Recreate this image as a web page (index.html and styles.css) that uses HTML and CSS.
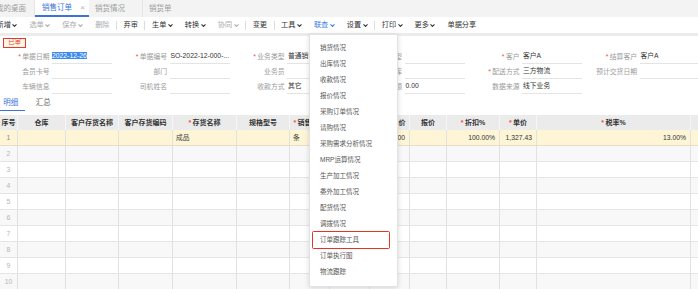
FILE: index.html
```html
<!DOCTYPE html>
<html lang="zh-CN">
<head>
<meta charset="utf-8">
<title>销售订单</title>
<link rel="stylesheet" href="styles.css">
</head>
<body>
<div class="tabbar">
  <div class="tab tab-first">我的桌面</div>
  <div class="tab tab-active"><span>销售订单</span><span class="close">×</span></div>
  <div class="tab tab-third">销货情况</div>
  <div class="tab tab-fourth">销货单</div>
</div>

<div class="toolbar">
  <span class="tb first">新增<svg class="chev" viewBox="0 0 5 3"><polyline points="0.5,0.4 2.5,2.4 4.5,0.4"/></svg></span>
  <span class="tb dis">选单<svg class="chev" viewBox="0 0 5 3"><polyline points="0.5,0.4 2.5,2.4 4.5,0.4"/></svg></span>
  <span class="tb dis">保存<svg class="chev" viewBox="0 0 5 3"><polyline points="0.5,0.4 2.5,2.4 4.5,0.4"/></svg></span>
  <span class="tb dis">删除</span>
  <span class="sep"></span>
  <span class="tb">弃审</span>
  <span class="sep"></span>
  <span class="tb">生单<svg class="chev" viewBox="0 0 5 3"><polyline points="0.5,0.4 2.5,2.4 4.5,0.4"/></svg></span>
  <span class="tb">转换<svg class="chev" viewBox="0 0 5 3"><polyline points="0.5,0.4 2.5,2.4 4.5,0.4"/></svg></span>
  <span class="tb dis">协同<svg class="chev" viewBox="0 0 5 3"><polyline points="0.5,0.4 2.5,2.4 4.5,0.4"/></svg></span>
  <span class="sep"></span>
  <span class="tb">变更</span>
  <span class="sep"></span>
  <span class="tb">工具<svg class="chev" viewBox="0 0 5 3"><polyline points="0.5,0.4 2.5,2.4 4.5,0.4"/></svg></span>
  <span class="tb blue">联查<svg class="chev" viewBox="0 0 5 3"><polyline points="0.5,0.4 2.5,2.4 4.5,0.4"/></svg></span>
  <span class="tb">设置<svg class="chev" viewBox="0 0 5 3"><polyline points="0.5,0.4 2.5,2.4 4.5,0.4"/></svg></span>
  <span class="sep"></span>
  <span class="tb">打印<svg class="chev" viewBox="0 0 5 3"><polyline points="0.5,0.4 2.5,2.4 4.5,0.4"/></svg></span>
  <span class="tb">更多<svg class="chev" viewBox="0 0 5 3"><polyline points="0.5,0.4 2.5,2.4 4.5,0.4"/></svg></span>
  <span class="tb">单据分享</span>
</div>

<div class="status"><span class="stamp">已审</span></div>

<div class="form">
  <div class="field"><div class="lbl"><i class="req">*</i>单据日期</div><div class="inp"><span class="sel">2022-12-26</span></div></div>
  <div class="field"><div class="lbl"><i class="req">*</i>单据编号</div><div class="inp">SO-2022-12-000-...</div></div>
  <div class="field"><div class="lbl"><i class="req">*</i>业务类型</div><div class="inp">普通销售</div></div>
  <div class="field"><div class="lbl"><i class="req">*</i>发票类型</div><div class="inp"></div></div>
  <div class="field"><div class="lbl"><i class="req">*</i>客户</div><div class="inp">客户A</div></div>
  <div class="field"><div class="lbl"><i class="req">*</i>结算客户</div><div class="inp">客户A</div></div>

  <div class="field"><div class="lbl">会员卡号</div><div class="inp"></div></div>
  <div class="field"><div class="lbl">部门</div><div class="inp"></div></div>
  <div class="field"><div class="lbl">业务员</div><div class="inp"></div></div>
  <div class="field"><div class="lbl">仓库</div><div class="inp"></div></div>
  <div class="field"><div class="lbl"><i class="req">*</i>配送方式</div><div class="inp">三方物流</div></div>
  <div class="field"><div class="lbl">预计交货日期</div><div class="inp"></div></div>

  <div class="field"><div class="lbl">车辆信息</div><div class="inp"></div></div>
  <div class="field"><div class="lbl">司机姓名</div><div class="inp"></div></div>
  <div class="field"><div class="lbl">收款方式</div><div class="inp">其它</div></div>
  <div class="field"><div class="lbl">订金金额</div><div class="inp">0.00</div></div>
  <div class="field"><div class="lbl">数据来源</div><div class="inp">线下业务</div></div>
  <div class="field"></div>
</div>

<div class="subtabs">
  <div class="subtab active">明细</div>
  <div class="subtab">汇总</div>
</div>

<div class="grid">
  <div class="row head">
    <div class="c">序号</div><div class="c">仓库</div><div class="c">客户存货名称</div><div class="c">客户存货编码</div>
    <div class="c"><i class="req">*</i>存货名称</div><div class="c">规格型号</div><div class="c"><i class="req">*</i>销售单位</div>
    <div class="c"><i class="req">*</i>数量</div><div class="c"><i class="req">*</i>含税单价</div><div class="c">报价</div>
    <div class="c"><i class="req">*</i>折扣%</div><div class="c"><i class="req">*</i>单价</div><div class="c"><i class="req">*</i>税率%</div><div class="c"><i class="req">*</i>税额</div>
  </div>
  <div class="row cur">
    <div class="c num">1</div><div class="c"></div><div class="c"></div><div class="c"></div>
    <div class="c l">成品</div><div class="c"></div><div class="c l">条</div>
    <div class="c r">1.00</div><div class="c r">1,500.00</div><div class="c"></div>
    <div class="c r">100.00%</div><div class="c r">1,327.43</div><div class="c r">13.00%</div><div class="c"></div>
  </div>
  <div class="row alt"><div class="c num">2</div><div class="c"></div><div class="c"></div><div class="c"></div><div class="c"></div><div class="c"></div><div class="c"></div><div class="c"></div><div class="c"></div><div class="c"></div><div class="c"></div><div class="c"></div><div class="c"></div><div class="c"></div></div>
  <div class="row"><div class="c num">3</div><div class="c"></div><div class="c"></div><div class="c"></div><div class="c"></div><div class="c"></div><div class="c"></div><div class="c"></div><div class="c"></div><div class="c"></div><div class="c"></div><div class="c"></div><div class="c"></div><div class="c"></div></div>
  <div class="row alt"><div class="c num">4</div><div class="c"></div><div class="c"></div><div class="c"></div><div class="c"></div><div class="c"></div><div class="c"></div><div class="c"></div><div class="c"></div><div class="c"></div><div class="c"></div><div class="c"></div><div class="c"></div><div class="c"></div></div>
  <div class="row"><div class="c num">5</div><div class="c"></div><div class="c"></div><div class="c"></div><div class="c"></div><div class="c"></div><div class="c"></div><div class="c"></div><div class="c"></div><div class="c"></div><div class="c"></div><div class="c"></div><div class="c"></div><div class="c"></div></div>
  <div class="row alt"><div class="c num">6</div><div class="c"></div><div class="c"></div><div class="c"></div><div class="c"></div><div class="c"></div><div class="c"></div><div class="c"></div><div class="c"></div><div class="c"></div><div class="c"></div><div class="c"></div><div class="c"></div><div class="c"></div></div>
  <div class="row"><div class="c num">7</div><div class="c"></div><div class="c"></div><div class="c"></div><div class="c"></div><div class="c"></div><div class="c"></div><div class="c"></div><div class="c"></div><div class="c"></div><div class="c"></div><div class="c"></div><div class="c"></div><div class="c"></div></div>
  <div class="row alt"><div class="c num">8</div><div class="c"></div><div class="c"></div><div class="c"></div><div class="c"></div><div class="c"></div><div class="c"></div><div class="c"></div><div class="c"></div><div class="c"></div><div class="c"></div><div class="c"></div><div class="c"></div><div class="c"></div></div>
  <div class="row"><div class="c num">9</div><div class="c"></div><div class="c"></div><div class="c"></div><div class="c"></div><div class="c"></div><div class="c"></div><div class="c"></div><div class="c"></div><div class="c"></div><div class="c"></div><div class="c"></div><div class="c"></div><div class="c"></div></div>
  <div class="row alt"><div class="c num">10</div><div class="c"></div><div class="c"></div><div class="c"></div><div class="c"></div><div class="c"></div><div class="c"></div><div class="c"></div><div class="c"></div><div class="c"></div><div class="c"></div><div class="c"></div><div class="c"></div><div class="c"></div></div>
</div>

<div class="menu">
  <div class="mi">销货情况</div>
  <div class="mi">出库情况</div>
  <div class="mi">收款情况</div>
  <div class="mi">报价情况</div>
  <div class="mi">采购订单情况</div>
  <div class="mi">请购情况</div>
  <div class="mi">采购需求分析情况</div>
  <div class="mi">MRP运算情况</div>
  <div class="mi">生产加工情况</div>
  <div class="mi">委外加工情况</div>
  <div class="mi">配货情况</div>
  <div class="mi">调拨情况</div>
  <div class="mi hl">订单跟踪工具</div>
  <div class="mi">订单执行图</div>
  <div class="mi">物流跟踪</div>
</div>
</body>
</html>
```

FILE: styles.css
```css
* { box-sizing: border-box; }

html, body { margin: 0; padding: 0; }

body {
  width: 698px;
  height: 289px;
  overflow: hidden;
  position: relative;
  background: #fff;
  color: #333;
  font-family: "Liberation Sans", "Noto Sans CJK SC", sans-serif;
}

/* ---------- top tabs ---------- */
.tabbar {
  display: flex;
  height: 17px;
  background: #f3f3f3;
  font-size: 7.5px;
  line-height: 17px;
  color: #9c9c9c;
  white-space: nowrap;
}
.tab { height: 17px; }
.tab-first {
  width: 46px;
  margin-left: -11px;
  padding-left: 7px;
  border-right: 1px solid #e4e4e4;
}
.tab-active {
  display: flex;
  width: 54px;
  padding-left: 7px;
  padding-right: 4px;
  background: #fff;
  color: #3b73d9;
  border-bottom: 2px solid #3b73d9;
  line-height: 16px;
}
.tab-active .close {
  margin-left: auto;
  color: #b0b0b0;
  font-size: 8px;
}
.tab-third {
  width: 54px;
  padding-left: 6px;
  border-right: 1px solid #e4e4e4;
}
.tab-fourth { padding-left: 6px; }

/* ---------- toolbar ---------- */
.toolbar {
  display: flex;
  align-items: center;
  gap: 12px;
  height: 19px;
  border-bottom: 3px solid #ececec;
  font-size: 7.2px;
  line-height: 10px;
  white-space: nowrap;
}
.tb {
  display: flex;
  align-items: center;
  color: #333;
}
.tb.first { margin-left: -3.5px; }
.tb.dis { color: #ababab; }
.tb.blue { color: #3a7ce0; }
.chev {
  width: 5px;
  height: 3px;
  margin-left: 1.5px;
  fill: none;
  stroke: currentColor;
  stroke-width: 1.1;
}
.sep {
  width: 1px;
  height: 9px;
  background: #dcdcdc;
  margin: 0 -5.5px;
}

/* ---------- status stamp ---------- */
.status {
  height: 13px;
  padding: 2.3px 0 0 3.3px;
}
.stamp {
  display: block;
  width: 22.7px;
  height: 9.4px;
  border: 1.3px solid #e23a2e;
  background: #fff6e6;
  color: #e23a2e;
  font-size: 6.3px;
  line-height: 6.8px;
  text-align: center;
}

/* ---------- header form ---------- */
.form {
  display: grid;
  grid-template-columns: repeat(6, 117.5px);
  grid-auto-rows: 15px;
}
.field {
  display: flex;
  height: 15px;
}
.lbl {
  width: 49.5px;
  flex: none;
  text-align: right;
  color: #9a9a9a;
  font-size: 6.8px;
  line-height: 15px;
  white-space: nowrap;
}
.req {
  color: #f0524a;
  font-style: normal;
  margin-right: 1.5px;
}
.inp {
  width: 60px;
  flex: none;
  height: 15px;
  margin-left: 2.5px;
  padding-left: 1px;
  border-bottom: 1px solid #e4e4e4;
  font-size: 6.8px;
  line-height: 14px;
  color: #333;
  white-space: nowrap;
  overflow: hidden;
}
.sel {
  background: #3b8af0;
  color: #fff;
  margin-left: -1px;
}

/* ---------- sub tabs ---------- */
.subtabs {
  display: flex;
  height: 16px;
  margin-top: 1px;
  font-size: 7.5px;
  line-height: 15px;
  color: #666;
}
.subtab {
  height: 16px;
  padding-left: 10.7px;
  border-bottom: 1.5px solid transparent;
}
.subtab.active {
  width: 25px;
  padding-left: 3.3px;
  color: #3b73d9;
  border-bottom-color: #3b73d9;
}

/* ---------- detail grid ---------- */
.grid {
  margin-top: 4px;
  width: 751px;
}
.row {
  display: grid;
  grid-template-columns: 18px 48px 53px 54px 64px 53px 40px 40px 40px 37px 53px 37px 154px 60px;
  height: 16px;
  border-bottom: 1px solid #e5e5e5;
  background: #fff;
}
.row.alt { background: #f8f8f8; }
.row.cur { background: #fdf5d6; border-bottom-color: #e8dfc0; }
.row.head {
  height: 15px;
  background: #ebebeb;
  border-bottom: none;
}
.c {
  border-right: 1px solid #e1e1e1;
  font-size: 6.8px;
  line-height: 15px;
  white-space: nowrap;
  overflow: hidden;
  padding: 0 4px;
}
.head .c {
  text-align: center;
  font-weight: bold;
  color: #333;
  font-size: 7px;
  line-height: 15px;
  padding: 0;
  border-right-color: #f6f6f6;
}
.c.num {
  text-align: center;
  color: #b5b5b5;
  padding: 0;
}
.cur .c.num { color: #8c8c8c; }
.c.l { text-align: left; padding-left: 3px; color: #444; }
.c.r { text-align: right; color: #333; }

/* ---------- dropdown menu (overlay) ---------- */
.menu {
  position: absolute;
  left: 309px;
  top: 34px;
  width: 89px;
  height: 253px;
  padding-top: 5.3px;
  background: #fff;
  border: 1px solid #e2e2e2;
  box-shadow: 0 1px 5px rgba(0, 0, 0, 0.14);
}
.mi {
  height: 16px;
  line-height: 16px;
  padding-left: 10px;
  font-size: 6.5px;
  color: #555;
  white-space: nowrap;
}
.mi.hl { position: relative; }
.mi.hl::after {
  content: "";
  position: absolute;
  left: 1.7px;
  right: 7px;
  top: -1.3px;
  bottom: -1px;
  border: 1.8px solid #e5322b;
  border-radius: 1.5px;
}
```
